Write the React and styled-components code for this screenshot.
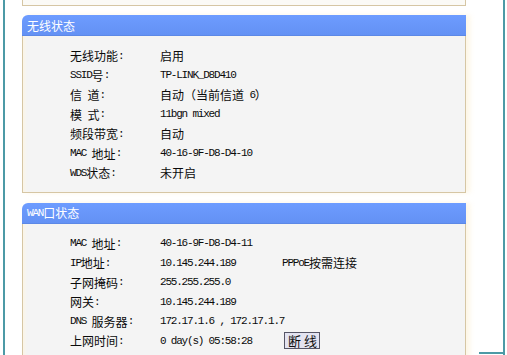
import React from "react";
import styled, { createGlobalStyle } from "styled-components";

const Global = createGlobalStyle`
  html, body { margin: 0; padding: 0; background: #ffffff; overflow: hidden; }
  body { font-family: "Noto Sans CJK SC", "Liberation Sans", sans-serif; }
`;

const Frame = styled.div`
  position: relative;
  box-sizing: border-box;
  margin-left: 3px;
  width: 502px;
  height: 355px;
  border-left: 2px solid #4c9aa6;
  border-right: 2px solid #4c9aa6;
  padding-left: 17px;
  overflow: hidden;
  &::after {
    content: "";
    position: absolute;
    right: 0;
    bottom: 1px;
    width: 24px;
    height: 2px;
    background: #4c9aa6;
  }
`;

const PrevTail = styled.div`
  box-sizing: border-box;
  width: 444px;
  height: 6px;
  border: 1px solid #d6c6a4;
  border-top: none;
  background: #fbfaf6;
`;

const Panel = styled.section`
  width: 444px;
  margin-top: ${(p) => p.$top}px;
  box-shadow: 4px 0 5px rgba(250, 236, 200, 0.45);
`;

const Header = styled.div`
  box-sizing: border-box;
  height: 21px;
  padding-left: 5px;
  display: flex;
  align-items: center;
  color: #ffffff;
  font-size: 12px;
  border-top-left-radius: 6px;
  background: linear-gradient(#6d9cff, #6391f4);
  border-bottom: 1px solid #5c88e6;
`;

const Body = styled.div`
  box-sizing: border-box;
  border: 1px solid #d6c6a4;
  border-top: none;
  background: #f4f4f4;
  box-shadow: inset 3px 0 3px -1px #fbf5e6;
  padding: 10px 0 9px 47px;
`;

const Row = styled.div`
  display: grid;
  grid-template-columns: 90px 122px auto;
  align-items: center;
  height: 19.5px;
  font-size: 12px;
  color: #0a0a0a;
  white-space: nowrap;
`;

const Cell = styled.div`
  display: flex;
  align-items: center;
`;

const Mono = styled.span`
  font-family: "Liberation Mono", "DejaVu Sans Mono", monospace;
  font-size: 11px;
  letter-spacing: -1.2px;
  color: inherit;
`;

const Button = styled.button`
  box-sizing: border-box;
  width: 36px;
  height: 17px;
  padding: 0;
  margin-left: 2px;
  border: 1px solid #555566;
  background: #e3e3f0;
  color: #111;
  font-family: "Noto Sans CJK SC", sans-serif;
  font-size: 13px;
  letter-spacing: 3px;
  line-height: 15px;
  text-indent: 3px;
`;

function T({ children }) {
  const parts = String(children).split(/([\x20-\x7e]+)/).filter(Boolean);
  return parts.map((p, i) =>
    /^[\x20-\x7e]+$/.test(p) ? <Mono key={i}>{p.replace(/ /g, "\u00a0")}</Mono> : <span key={i}>{p}</span>
  );
}

const wireless = [
  ["无线功能:", "启用"],
  ["SSID号:", "TP-LINK_D8D410"],
  ["信 道:", "自动（当前信道 6）"],
  ["模 式:", "11bgn mixed"],
  ["频段带宽:", "自动"],
  ["MAC 地址:", "40-16-9F-D8-D4-10"],
  ["WDS状态:", "未开启"],
];

const wan = [
  ["MAC 地址:", "40-16-9F-D8-D4-11"],
  ["IP地址:", "10.145.244.189", "PPPoE按需连接"],
  ["子网掩码:", "255.255.255.0"],
  ["网关:", "10.145.244.189"],
  ["DNS 服务器:", "172.17.1.6 , 172.17.1.7"],
];

export default function App() {
  return (
    <>
      <Global />
      <Frame>
        <PrevTail />
        <Panel $top={9}>
          <Header>无线状态</Header>
          <Body>
            {wireless.map(([l, v]) => (
              <Row key={l}>
                <Cell><T>{l}</T></Cell>
                <Cell><T>{v}</T></Cell>
              </Row>
            ))}
          </Body>
        </Panel>
        <Panel $top={10}>
          <Header><T>WAN口状态</T></Header>
          <Body>
            {wan.map(([l, v, x]) => (
              <Row key={l}>
                <Cell><T>{l}</T></Cell>
                <Cell><T>{v}</T></Cell>
                {x ? <Cell><T>{x}</T></Cell> : null}
              </Row>
            ))}
            <Row>
              <Cell><T>上网时间:</T></Cell>
              <Cell><T>0 day(s) 05:58:28</T></Cell>
              <Cell><Button>断线</Button></Cell>
            </Row>
          </Body>
        </Panel>
      </Frame>
    </>
  );
}
